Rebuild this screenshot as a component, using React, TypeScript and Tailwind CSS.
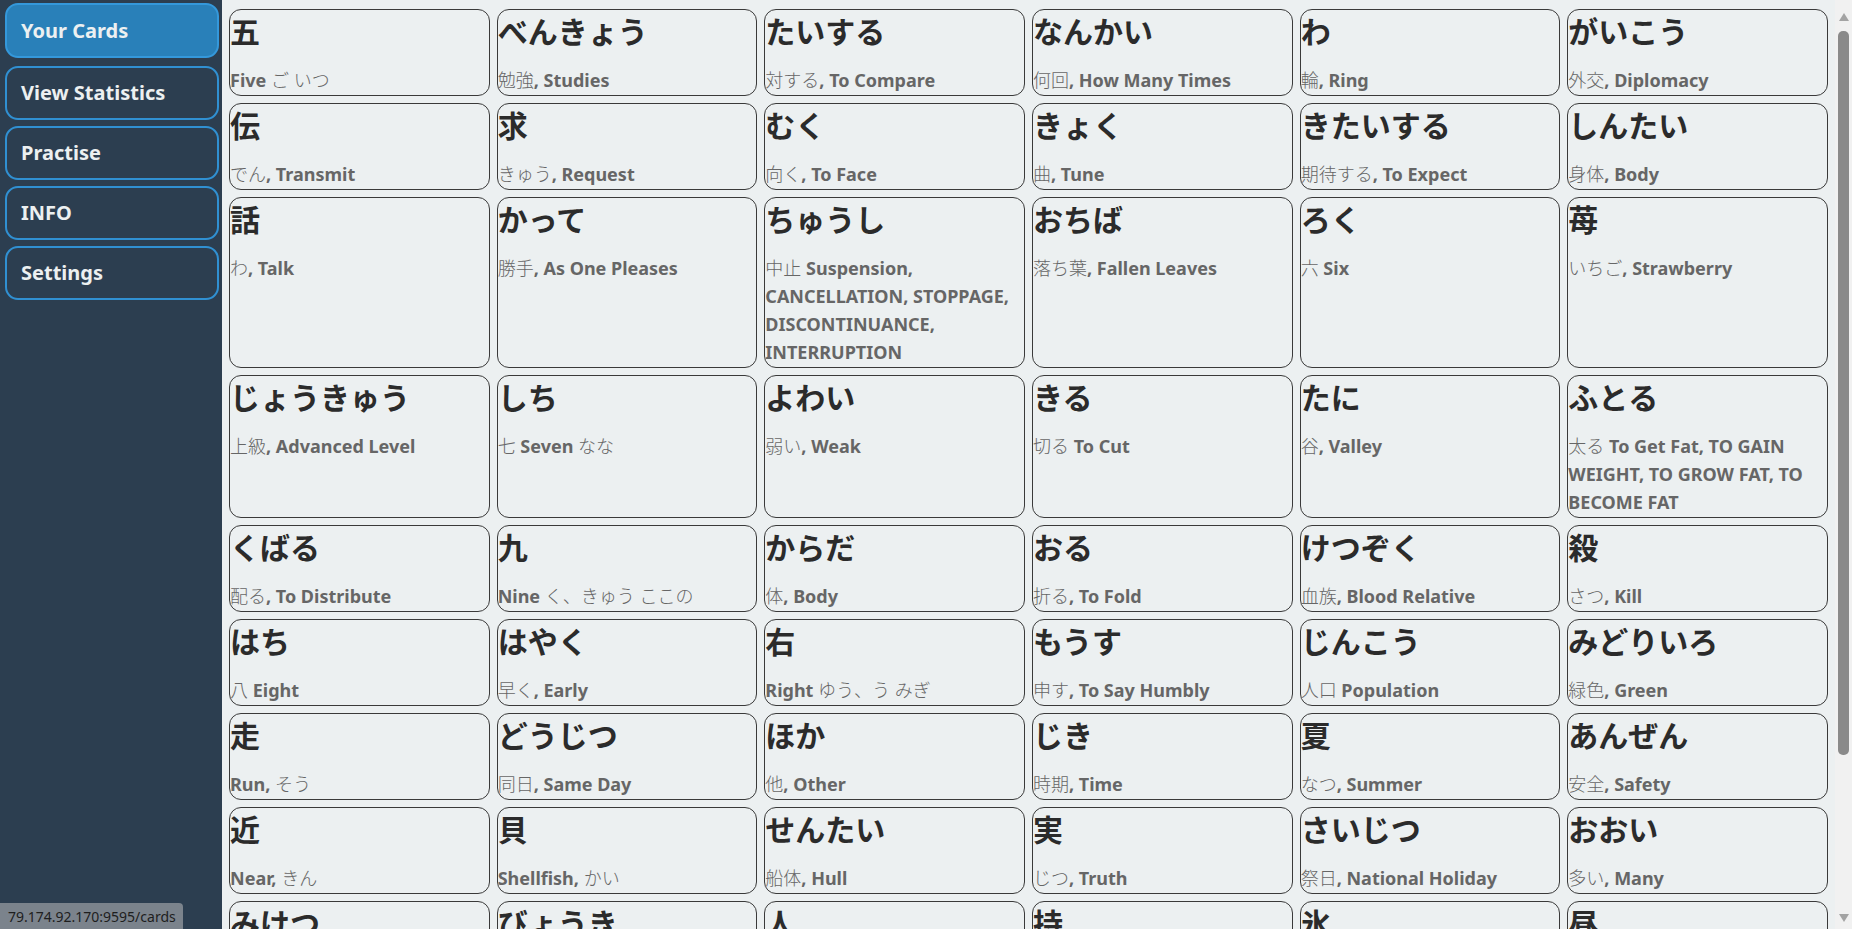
import React from "react";

type Card = [string, string];

const rows: Card[][] = [
  [["五", "|Five| ご いつ"], ["べんきょう", "勉強|, Studies"], ["たいする", "対する|, To Compare"], ["なんかい", "何回|, How Many Times"], ["わ", "輪|, Ring"], ["がいこう", "外交|, Diplomacy"]],
  [["伝", "でん|, Transmit"], ["求", "きゅう|, Request"], ["むく", "向く|, To Face"], ["きょく", "曲|, Tune"], ["きたいする", "期待する|, To Expect"], ["しんたい", "身体|, Body"]],
  [["話", "わ|, Talk"], ["かって", "勝手|, As One Pleases"], ["ちゅうし", "中止| Suspension, CANCELLATION, STOPPAGE, DISCONTINUANCE, INTERRUPTION"], ["おちば", "落ち葉|, Fallen Leaves"], ["ろく", "六| Six"], ["苺", "いちご|, Strawberry"]],
  [["じょうきゅう", "上級|, Advanced Level"], ["しち", "七| Seven| なな"], ["よわい", "弱い|, Weak"], ["きる", "切る| To Cut"], ["たに", "谷|, Valley"], ["ふとる", "太る| To Get Fat, TO GAIN WEIGHT, TO GROW FAT, TO BECOME FAT"]],
  [["くばる", "配る|, To Distribute"], ["九", "|Nine| く、きゅう ここの"], ["からだ", "体|, Body"], ["おる", "折る|, To Fold"], ["けつぞく", "血族|, Blood Relative"], ["殺", "さつ|, Kill"]],
  [["はち", "八| Eight"], ["はやく", "早く|, Early"], ["右", "|Right| ゆう、う みぎ"], ["もうす", "申す|, To Say Humbly"], ["じんこう", "人口| Population"], ["みどりいろ", "緑色|, Green"]],
  [["走", "|Run,| そう"], ["どうじつ", "同日|, Same Day"], ["ほか", "他|, Other"], ["じき", "時期|, Time"], ["夏", "なつ|, Summer"], ["あんぜん", "安全|, Safety"]],
  [["近", "|Near,| きん"], ["貝", "|Shellfish,| かい"], ["せんたい", "船体|, Hull"], ["実", "じつ|, Truth"], ["さいじつ", "祭日|, National Holiday"], ["おおい", "多い|, Many"]],
  [["みけつ", "未決|, Pending"], ["びょうき", "病気|, Illness"], ["人", "じん|, Person"], ["持", "じ|, Hold"], ["氷", "ひょう|, Ice"], ["昼", "ちゅう|, Noon"]],
];

const FONT = '"Noto Sans", "Noto Sans CJK JP", sans-serif';
const CJK = '"Noto Sans CJK JP", "Noto Sans", sans-serif';

function Sub({ text }: { text: string }) {
  const parts = text.split("|");
  return (
    <p className="mt-[16px] pb-[1px] text-[18px] leading-[28px] text-[#666]">
      {parts.map((p, i) =>
        i % 2 === 1 ? (
          <b key={i} className="font-bold">
            {p}
          </b>
        ) : (
          <span key={i} className="font-light">
            {p}
          </span>
        )
      )}
    </p>
  );
}

const nav = ["Your Cards", "View Statistics", "Practise", "INFO", "Settings"];

export default function App() {
  return (
    <div
      className="relative flex h-[929px] w-full overflow-hidden bg-[#ecf0f1]"
      style={{ fontFamily: FONT }}
    >
      <aside className="flex w-[222px] shrink-0 flex-col gap-[6px] bg-[#2c3e50] pl-[5px] pr-[3px] pt-[3px]">
        {nav.map((n, i) => (
          <div
            key={n}
            className={
              i === 0
                ? "mb-[2px] flex h-[55px] items-center rounded-[13px] border-2 border-[#3498db] bg-[#2980b9] pl-[14px] text-[20px] font-bold text-[#ecf0f1]"
                : "flex h-[54px] items-center rounded-[13px] border-2 border-[#3090d2] pl-[14px] text-[20px] font-bold text-[#ecf0f1]"
            }
          >
            {n}
          </div>
        ))}
      </aside>
      <main className="min-w-0 flex-1 overflow-hidden px-[7px] pt-[9px]">
        <div className="grid grid-cols-6 gap-[7px]">
          {rows.flat().map(([t, s], i) => (
            <div key={i} className="rounded-[12px] border border-[#3a3a3a]">
              <h2
                className="m-0 text-[30px] font-bold leading-[40px] text-[#2b2b2b]"
                style={{ fontFamily: CJK }}
              >
                {t}
              </h2>
              <Sub text={s} />
            </div>
          ))}
        </div>
      </main>
      <div className="flex w-[17px] shrink-0 flex-col items-center bg-[#f1f1f1]">
        <div className="mt-[13px] h-0 w-0 border-x-[5px] border-b-[8px] border-x-transparent border-b-[#a3a3a3]" />
        <div className="mt-[10px] h-[724px] w-[11px] rounded-[5px] bg-[#8a8a8a]" />
        <div className="flex-1" />
        <div className="mb-[7px] h-0 w-0 border-x-[5px] border-t-[8px] border-x-transparent border-t-[#a3a3a3]" />
      </div>
      <div className="absolute bottom-0 left-0 flex h-[26px] w-[183px] items-center rounded-tr-[4px] bg-[#7b838c] pl-[8px] text-[14px] text-[#1e1e1e]">
        79.174.92.170:9595/cards
      </div>
    </div>
  );
}
